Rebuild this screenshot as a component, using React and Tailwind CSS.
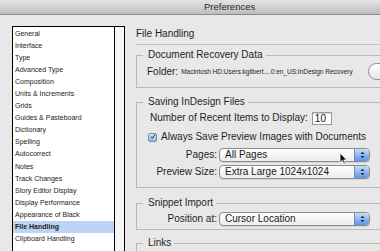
const sections = [
  'General',
  'Interface',
  'Type',
  'Advanced Type',
  'Composition',
  'Units & Increments',
  'Grids',
  'Guides & Pasteboard',
  'Dictionary',
  'Spelling',
  'Autocorrect',
  'Notes',
  'Track Changes',
  'Story Editor Display',
  'Display Performance',
  'Appearance of Black',
  'File Handling',
  'Clipboard Handling',
];

function PopUp({ value }) {
  return (
    <div className="flex h-[14px] w-[151px] items-stretch rounded-[4px] border border-[#8c8c8c] bg-gradient-to-b from-white to-[#ececec] shadow-[0_1px_0_rgba(0,0,0,0.08)]">
      <span className="flex-1 pl-[5px] text-[10px] leading-[12px] text-[#1a1a1a]">{value}</span>
      <span className="flex w-[15px] items-center justify-center rounded-r-[3px] border-l border-[#6b8fc4] bg-gradient-to-b from-[#c9def8] via-[#8fb8ee] to-[#5d97e3]">
        <svg width="5" height="8" viewBox="0 0 5 8">
          <path d="M0.5 3 L2.5 0.8 L4.5 3 Z" fill="#1c2c4a" />
          <path d="M0.5 5 L2.5 7.2 L4.5 5 Z" fill="#1c2c4a" />
        </svg>
      </span>
    </div>
  );
}

function Group({ title, children, className = '' }) {
  return (
    <fieldset className={`border border-[#bababa] ${className}`}>
      <legend className="ml-[6px] pl-[5px] pr-[3px] text-[10px] leading-[12px] text-[#1f1f1f]">
        {title}
      </legend>
      {children}
    </fieldset>
  );
}

function FieldRow({ label, value, className = '' }) {
  return (
    <div className={`flex items-center pl-[13px] ${className}`}>
      <span className="w-[67px] shrink-0 text-right text-[10px] leading-[12px] text-[#1f1f1f]">{label}</span>
      <div className="ml-[2px] shrink-0">
        <PopUp value={value} />
      </div>
    </div>
  );
}

export default function App() {
  return (
    <div
      className="relative h-[251px] w-[380px] overflow-hidden bg-[#e8e8e8]"
      style={{ fontFamily: '"Liberation Sans", Arial, sans-serif' }}
    >
      {/* title bar */}
      <div className="h-[15px] border-b border-[#8a8a8a] bg-gradient-to-b from-[#e4e4e4] to-[#bdbdbd] pl-[204px] text-[9.5px] leading-[14px] text-[#2a2a2a]">
        Preferences
      </div>

      <div className="flex items-start">
        {/* section list */}
        <div className="ml-[12px] mt-[11px] flex h-[230px] w-[113px] shrink-0 overflow-hidden border border-black bg-white">
          <ul className="w-[101px] pt-[0.5px]">
            {sections.map((s) => (
              <li
                key={s}
                className={`h-[12.1px] pl-[2px] text-[7px] leading-[12px] text-[#222] ${
                  s === 'File Handling' ? 'bg-[#b9d4f4] font-bold' : ''
                }`}
              >
                {s}
              </li>
            ))}
          </ul>
          <div className="flex-1 border-l-[1.5px] border-black bg-[#f6f6f6]" />
        </div>

        {/* panel */}
        <div className="ml-[11px] mt-[13px] w-[260px] shrink-0">
          <div className="border-b border-[#c4c4c4] pb-[4px] text-[10px] leading-[12px] text-[#1f1f1f]">
            File Handling
          </div>

          <Group title="Document Recovery Data" className="mt-[4px]">
            <div className="flex items-center pb-[7px] pl-[10px] pt-[2px]">
              <div className="flex w-[221px] shrink-0 items-center">
                <span className="text-[10px] leading-[12px] text-[#1f1f1f]">Folder:</span>
                <span className="ml-[3px] whitespace-nowrap text-[6.5px] leading-[10px] text-[#222]">
                  Macintosh HD:Users:kgilbert....0:en_US:InDesign Recovery
                </span>
              </div>
              <div className="h-[17px] w-[40px] shrink-0 rounded-full border border-[#8f8f8f] bg-gradient-to-b from-white to-[#e6e6e6]" />
            </div>
          </Group>

          <Group title="Saving InDesign Files" className="mt-[8px]">
            <div className="pb-[8px] pt-[3px]">
              <div className="flex h-[14px] items-center pl-[13px]">
                <span className="text-[10px] leading-[12px] text-[#1f1f1f]">
                  Number of Recent Items to Display:
                </span>
                <span className="ml-[4px] h-[13px] w-[20px] border border-[#9a9a9a] bg-white pl-[2px] text-[10px] leading-[11px] text-[#1a1a1a] shadow-[inset_0_1px_0_#d0d0d0]">
                  10
                </span>
              </div>
              <div className="mt-[5px] flex h-[14px] items-center pl-[11px]">
                <span className="flex h-[9px] w-[9px] items-center justify-center rounded-[2px] border border-[#7f8ea8] bg-gradient-to-b from-[#d9e7fa] to-[#8fb6ea]">
                  <svg width="9" height="9" viewBox="0 0 9 9" className="-mt-[2px] ml-[1px]">
                    <path d="M1.5 4.6 L3.6 7 L8 1" fill="none" stroke="#13284d" strokeWidth="1.5" />
                  </svg>
                </span>
                <span className="ml-[4px] text-[10px] leading-[12px] text-[#1f1f1f]">
                  Always Save Preview Images with Documents
                </span>
              </div>
              <FieldRow label="Pages:" value="All Pages" className="mt-[4px]" />
              <FieldRow label="Preview Size:" value="Extra Large 1024x1024" className="mt-[3px]" />
            </div>
          </Group>

          <Group title="Snippet Import" className="mt-[9px]">
            <div className="pb-[3px] pt-[3px]">
              <FieldRow label="Position at:" value="Cursor Location" />
            </div>
          </Group>

          <Group title="Links" className="mt-[7px]">
            <div className="h-[20px]" />
          </Group>
        </div>
      </div>

      {/* mouse pointer */}
      <svg width="9" height="13" viewBox="0 0 9 13" className="absolute left-[339px] top-[152px]">
        <path d="M1 1 L1 10.5 L3.3 8.4 L5 12 L6.4 11.4 L4.8 7.9 L7.8 7.9 Z" fill="#111" stroke="#fff" strokeWidth="0.8" />
      </svg>
    </div>
  );
}
